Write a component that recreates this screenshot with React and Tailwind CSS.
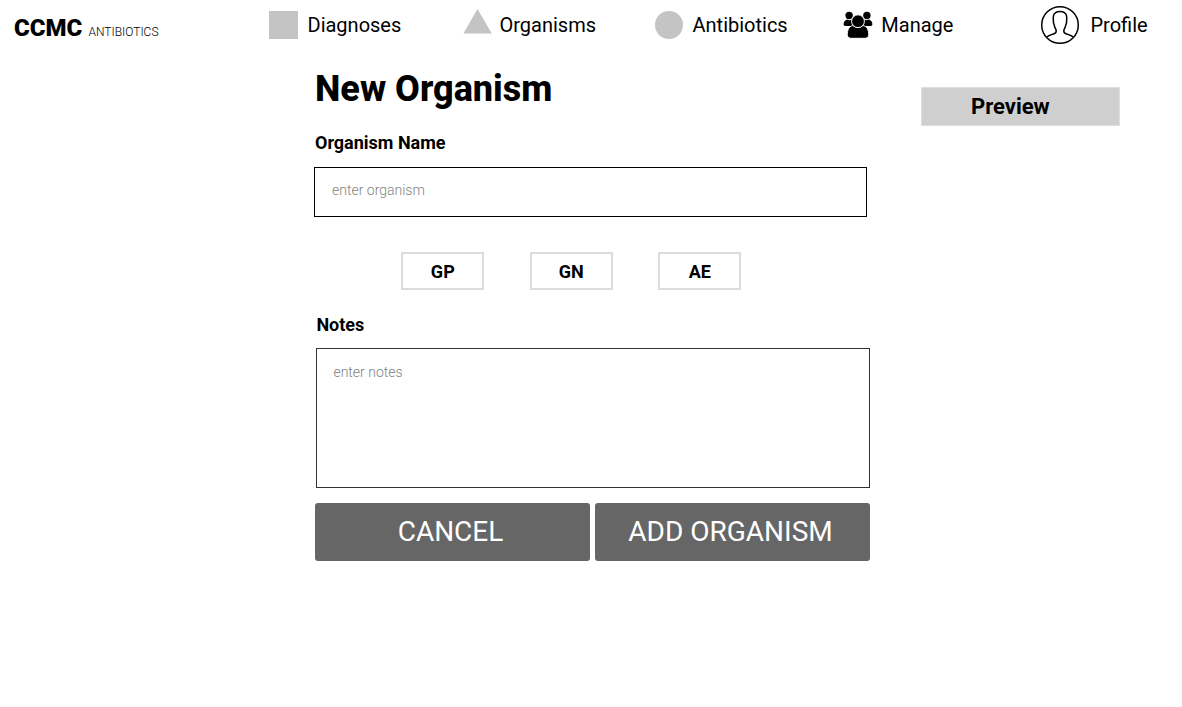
import React from "react";

function ManageIcon() {
  return (
    <svg className="h-[28px] w-[30px] shrink-0" viewBox="0 0 30 28" fill="#000">
      <circle cx="6.1" cy="4.5" r="3.7" />
      <circle cx="23.9" cy="4.5" r="3.7" />
      <path d="M.6 13.4C.6 10.9 2 9.2 4 8.6Q6.5 10 9 8.6L13 15H3.2Q.6 15 .6 13.4ZM29.4 13.4C29.4 10.9 28 9.2 26 8.6Q23.5 10 21 8.6L17 15H26.8Q29.4 15 29.4 13.4Z" />
      <g stroke="#fff" strokeWidth="1">
        <path d="M4.2 23.8C4.2 18.8 6.3 15.2 9.7 14.5Q15 18 20.3 14.5C23.7 15.2 25.8 18.8 25.8 23.8Q25.8 27.3 22.3 27.3H7.7Q4.2 27.3 4.2 23.8Z" />
        <circle cx="15" cy="10.2" r="6.4" />
      </g>
    </svg>
  );
}

function ProfileIcon() {
  return (
    <svg className="h-[40px] w-[40px] shrink-0" viewBox="0 0 40 40" fill="none" stroke="#000" strokeWidth="1.5" strokeLinejoin="round">
      <circle cx="20" cy="20" r="18.3" />
      <path d="M7 32C8.7 30.5 11.5 29.6 14.2 28.7C16 28.1 16.3 27.4 16.2 25.8C16.1 24.1 15 23.5 14.5 21.2C14.1 19.5 13.5 18.6 13.4 16.7C13.2 14.8 13.1 12.5 13.5 10.7C14.2 7.9 16.8 6.5 20 6.5C23.2 6.5 25.8 7.9 26.5 10.7C26.9 12.5 26.8 14.8 26.6 16.7C26.5 18.6 25.9 19.5 25.5 21.2C25 23.5 23.9 24.1 23.8 25.8C23.7 27.4 24 28.1 25.8 28.7C28.5 29.6 31.3 30.5 33 32" />
    </svg>
  );
}

function NavItem({ className, icon, label }) {
  return (
    <a className={`flex h-[50px] shrink-0 items-center whitespace-nowrap text-[20px] leading-[24px] ${className}`}>
      {icon}
      <span>{label}</span>
    </a>
  );
}

function Choice({ children }) {
  return (
    <button className="h-[38px] w-[83px] border-2 border-[#dcdcdc] bg-white pt-px text-[18px] leading-[24px] font-bold">
      {children}
    </button>
  );
}

export default function App() {
  return (
    <div className="h-[707px] w-[1182px] overflow-hidden bg-white font-['Roboto',sans-serif] text-black">
      <header className="flex h-[50px]">
        <div className="flex w-[269px] shrink-0 items-baseline pt-[13px] pl-[14px] whitespace-nowrap">
          <span className="w-[74.5px] text-[24px] leading-[30px] font-black">CCMC</span>
          <span className="text-[12px] font-light">ANTIBIOTICS</span>
        </div>
        <NavItem className="w-[194px] gap-[10px]" icon={<span className="size-[28.5px] bg-[#c4c4c4]" />} label="Diagnoses" />
        <NavItem
          className="w-[191.5px] gap-[7.5px]"
          icon={
            <svg className="mb-[7px] h-[25px] w-[29px]" viewBox="0 0 29 25" fill="#c4c4c4">
              <path d="M14.5 0L28.8 24.6H.4Z" />
            </svg>
          }
          label="Organisms"
        />
        <NavItem className="w-[188.5px] gap-[9.5px]" icon={<span className="size-[28.5px] rounded-full bg-[#c4c4c4]" />} label="Antibiotics" />
        <NavItem className="w-[197px] gap-[8.3px]" icon={<ManageIcon />} label="Manage" />
        <NavItem className="gap-[10.5px]" icon={<ProfileIcon />} label="Profile" />
      </header>

      <div className="flex">
        <main className="ml-[314px] w-[556px]">
          <h1 className="mt-[17px] h-[44px] pl-[1px] text-[36px] leading-[44px] font-extrabold">New Organism</h1>
          <label className="mt-[20px] block h-[24px] pl-[1px] text-[18px] leading-[24px] font-bold">Organism Name</label>
          <input
            className="mt-[12px] block h-[50px] w-[553px] border border-black pr-4 pb-[4px] pl-[17px] text-[14px] font-light placeholder:text-[#828282]"
            placeholder="enter organism"
          />
          <div className="mt-[35px] ml-[87.3px] flex gap-[45.5px]">
            <Choice>GP</Choice>
            <Choice>GN</Choice>
            <Choice>AE</Choice>
          </div>
          <label className="mt-[23px] block h-[24px] pl-[2.4px] text-[18px] leading-[24px] font-bold">Notes</label>
          <textarea
            className="mt-[11px] ml-[2px] block h-[140px] w-[554px] resize-none border border-[#333] px-[16.4px] pt-[13px] text-[14px] leading-[20px] font-light placeholder:text-[#828282]"
            placeholder="enter notes"
          />
          <div className="mt-[14.5px] ml-[1px] flex gap-[5px] text-[28px] leading-[34px] text-white">
            <button className="h-[58px] w-[275px] rounded-[3px] bg-[#666] pr-[4px]">CANCEL</button>
            <button className="h-[58px] w-[275px] rounded-[3px] bg-[#666] pr-[4px]">ADD ORGANISM</button>
          </div>
        </main>
        <aside className="mt-[37px] ml-[51px] h-[39px] w-[199px] border border-[#dedede] bg-[#cfcfcf] pl-[49px] text-[22px] leading-[37px] font-bold">
          Preview
        </aside>
      </div>
    </div>
  );
}
